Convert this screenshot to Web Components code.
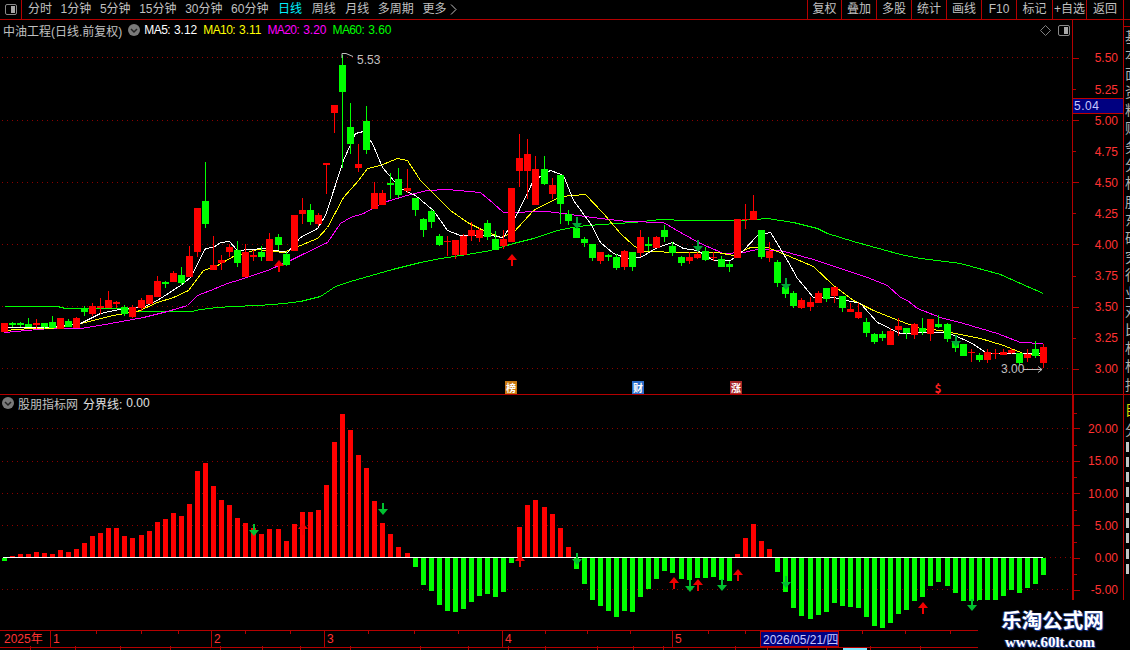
<!DOCTYPE html>
<html lang="zh"><head><meta charset="utf-8"><title>中油工程</title>
<style>
html,body{margin:0;padding:0;background:#000;overflow:hidden}
body{width:1130px;height:650px;font:12px "Liberation Sans","Noto Sans CJK SC",sans-serif;color:#c0c0c0}
</style></head><body>
<kline-app></kline-app>
<script>
const RED='#b40000',TXT='"Liberation Sans","Noto Sans CJK SC",sans-serif';
const NS='http://www.w3.org/2000/svg';
const C=[['r',323,323,332,332],['g',322,323,325,327],['g',322,323,325,327],['g',318,324,327,327],['r',319,323,325,329],['g',323,323,327,329],['g',316,322,328,328],['r',318,318,329,329],['g',319,321,327,327],['r',317,318,328,328],
['g',306,308,312,316],['r',303,306,314,316],['r',298,306,308,314],['r',291,300,308,308],['r',301,302,304,308],['g',305,307,314,316],['r',305,307,317,318],['r',298,300,308,311],['r',295,295,304,304],['r',276,281,297,297],
['g',281,282,284,288],['r',271,273,282,282],['g',267,275,283,285],['r',246,256,277,277],['r',208,208,252,257],['g',162,201,224,228],['r',236,265,270,270],['r',255,260,263,270],['r',244,247,252,257],['g',241,250,263,267],
['r',244,252,277,277],['r',250,255,257,261],['g',246,252,257,261],['r',233,239,261,261],['g',234,237,245,250],['g',252,254,265,266],['r',215,215,251,251],['r',198,210,214,224],['g',204,210,222,225],['r',213,215,224,226],
['r',163,163,165,194],['r',105,105,113,133],['g',55,65,92,168],['g',103,127,144,154],['r',144,164,168,172],['g',106,121,150,154],['r',182,193,209,209],['r',190,193,205,205],['g',173,183,185,199],['g',168,179,195,198],
['r',169,188,191,193],['g',198,198,210,216],['g',218,219,230,237],['g',209,211,222,228],['g',234,236,245,246],['r',236,241,242,256],['r',240,240,255,259],['r',234,236,255,255],['r',222,230,236,241],['r',228,230,238,242],
['g',220,223,237,240],['g',231,239,250,250],['r',230,239,246,249],['r',188,188,242,242],['r',134,158,171,187],['r',139,154,171,199],['r',156,169,205,205],['g',156,169,184,185],['r',178,185,194,199],['g',175,175,204,224],
['g',210,214,221,225],['g',228,228,238,238],['g',237,239,243,247],['g',244,244,258,261],['r',252,252,261,264],['g',254,255,257,261],['g',254,257,268,270],['r',250,251,267,270],['g',252,252,267,271],['r',230,237,253,257],
['g',237,244,246,251],['r',236,237,248,248],['g',225,230,237,242],['g',242,246,253,256],['g',256,257,263,266],['r',252,257,261,264],['r',252,254,258,259],['g',247,251,260,261],['r',252,257,258,261],['g',256,259,267,267],
['g',261,264,267,272],['r',219,219,258,258],['r',204,219,220,229],['r',195,211,220,220],['g',230,230,257,259],['r',242,251,258,262],['g',260,262,283,287],['g',278,287,294,298],['g',291,293,306,308],['r',298,300,308,309],
['r',297,302,307,311],['r',291,293,303,303],['g',288,288,299,302],['r',287,287,296,303],['g',296,296,308,312],['r',303,309,312,312],['r',303,312,318,319],['g',318,322,333,337],['g',333,334,342,344],['g',331,334,338,341],
['r',328,331,345,345],['r',318,326,330,336],['g',328,328,333,339],['r',323,324,335,339],['g',318,328,332,335],['r',319,319,334,341],['g',315,324,327,328],['g',323,324,339,342],['g',335,341,348,352],['g',344,344,356,356],
['r',349,352,353,362],['g',353,355,360,362],['r',349,352,360,363],['r',349,353,354,359],['r',349,352,355,355],['r',348,350,353,354],['g',353,353,363,365],['r',349,354,358,362],['g',341,349,356,358],['r',344,347,363,368]];
const BARS=[-3,1,3,3,5,4,3,7,5,8,14,21,24,29,29,21,19,22,26,35,38,44,41,53,86,94,71,57,52,39,34,29,23,28,28,16,33,45,45,47,72,115,143,127,102,89,56,34,23,10,4,
-9,-27,-33,-47,-53,-54,-51,-44,-38,-36,-39,-34,-5,30,52,57,50,43,29,10,-11,-26,-42,-48,-53,-59,-53,-54,-39,-31,-21,-13,-15,-21,-22,-20,-20,-19,-22,-23,3,19,33,16,8,-14,-34,-50,-58,
-61,-57,-54,-45,-48,-49,-50,-59,-68,-70,-65,-56,-52,-43,-39,-28,-24,-28,-35,-43,-43,-43,-43,-43,-38,-32,-35,-30,-26,-17];
const MA={
w:'3,327 50,327 80,323 100,313 123,308 143,307 160,298 180,285 190,277 205,248 213,247 220,242 229,241 237,250 263,248 287,252 300,237 317,228 325,215 343,160 355,133 363,131 372,143 382,167 400,188 415,195 433,210 447,230 460,235 490,235 503,237 517,213 533,180 550,170 563,175 573,200 590,223 600,242 613,253 627,258 640,257 657,247 672,242 683,248 697,250 713,260 730,260 743,250 757,235 770,232 787,260 797,278 813,297 833,297 860,303 877,322 900,333 930,332 947,332 970,342 987,353 1017,353 1043,353',
y:'4,330 30,328 50,328 80,323 113,315 137,311 157,302 173,297 188,290 203,270 217,265 233,256 257,249 283,252 300,245 317,238 327,227 343,197 358,180 367,168 380,165 397,158 407,160 420,180 437,197 450,210 467,222 483,230 500,237 513,232 533,210 560,196 585,194 603,213 620,233 633,245 643,251 683,252 717,252 733,255 750,247 767,247 787,255 813,266 833,285 853,300 873,310 898,320 920,328 940,330 980,338 1003,345 1023,353 1043,355',
m:'4,332 49,328 80,328 87,327 110,323 143,317 167,311 187,305 197,295 210,290 227,283 240,279 267,270 290,260 300,255 327,242 340,223 350,217 363,213 383,202 410,194 427,190 447,189 480,192 493,203 503,212 547,211 600,218 627,221 663,222 680,232 700,243 723,253 743,252 757,249 780,250 813,259 840,268 867,277 887,285 900,297 907,300 917,308 940,317 963,323 997,333 1020,342 1043,343',
g:'4,306 57,306 65,308 125,308 137,311 191,311 200,309 217,307 233,306 257,305 273,304 283,303 300,301 320,296 335,286 350,281 392,269 420,262 440,258 467,254 490,250 513,243 533,238 557,230 577,226 600,224 633,222 660,219 687,220 740,220 767,218 793,222 817,228 827,233 853,241 900,254 920,258 960,263 1000,274 1020,283 1043,293'};
const UP=[[512,254,1],[279,260,1]],DN=[[577,217],[698,240],[786,278],[956,335]];
const IUP=[[303,523],[520,555],[674,577],[698,579],[738,569],[923,602]],IDN=[[254,524],[383,503],[577,553],[690,580],[722,579],[786,576],[972,599]];
function el(p,n,a){const e=document.createElementNS(NS,n);for(const k in a)e.setAttribute(k,a[k]);p.appendChild(e);return e}
function rect(p,x,y,w,h,f){return el(p,'rect',{x,y,width:w,height:Math.max(h,1),fill:f})}
function grid(s,ys){ys.forEach(y=>el(s,'line',{x1:2,x2:1072,y1:y+.5,y2:y+.5,stroke:'#8c0000','stroke-width':1,'stroke-dasharray':'1 4','shape-rendering':'crispEdges'}))}
function arrow(s,x,y,up,f){
 if(up)el(s,'path',{d:`M${x} ${y}L${x+5} ${y+6}H${x+1}V${y+12}H${x-1}V${y+6}H${x-5}Z`,fill:f});
 else el(s,'path',{d:`M${x} ${y+12}L${x+5} ${y+6}H${x+1}V${y}H${x-1}V${y+6}H${x-5}Z`,fill:f});
}
const tpl=(html)=>{const t=document.createElement('template');t.innerHTML=html;return t};
function def(name,html,init){
 const t=tpl(html);
 customElements.define(name,class extends HTMLElement{connectedCallback(){if(this.shadowRoot)return;const r=this.attachShadow({mode:'open'});r.appendChild(t.content.cloneNode(true));if(init)init.call(this,r)}});
}
def('round-chevron',`<style>:host{display:inline-block;width:12px;height:12px;flex:none}svg{display:block}</style>
<svg width="12" height="12" viewBox="0 0 12 12"><circle cx="6" cy="6" r="6" fill="#7a7a7a"/><path d="M3 5l3 3 3-3" fill="none" stroke="#222" stroke-width="1.5"/></svg>`);
def('panel-icon',`<style>:host{display:inline-block;width:12px;height:11px;flex:none}svg{display:block}</style>
<svg width="12" height="11" viewBox="0 0 12 11"><rect x=".5" y=".5" width="11" height="10" rx="1.5" fill="none" stroke="#8a8a8a"/><rect x="6" y="2" width="4" height="7" fill="#a8a8a8"/></svg>`);
def('tab-item',`<style>:host{display:flex;align-items:center;color:#c0c0c0;white-space:nowrap;line-height:19px;font-size:12px}:host([active]){color:#00f0ff}</style><slot></slot>`);
def('tool-button',`<style>:host{display:block;box-sizing:border-box;border-left:1px solid ${RED};text-align:center;line-height:19px;font-size:12px;color:#c0c0c0;white-space:nowrap;overflow:hidden}</style><slot></slot>`);
def('top-bar',`<style>
:host{display:flex;height:19px;border-bottom:1px solid ${RED};font-family:${TXT}}
.ic{width:21px;border-right:1px solid ${RED};display:flex;align-items:center;justify-content:center}
.tabs{display:flex;gap:8.6px;margin-left:6px;flex:1}
.tools{display:flex;border-right:1px solid ${RED};margin-right:6px}
</style><div class="ic"><panel-icon></panel-icon></div>
<div class="tabs"><slot name="tab"></slot></div><div class="tools"><slot name="tool"></slot></div>`);
def('main-canvas',`<style>:host{display:block;width:1072px;height:374px}svg{display:block}</style><svg width="1072" height="374" viewBox="0 20 1072 374"></svg>`,function(r){
 const s=r.querySelector('svg');grid(s,[57,120,182,244,306,368]);
 const cols={w:'#fff',y:'#ffff00',m:'#ff00ff',g:'#00ff00'};
 const g=el(s,'g',{'shape-rendering':'crispEdges'});
 const l=el(g,'g',{transform:'translate(.5 .5)'});
 ['g','m','y','w'].forEach(k=>el(l,'polyline',{points:MA[k],fill:'none',stroke:cols[k],'stroke-width':1}));
 C.forEach((c,i)=>{const x=Math.floor(1+8.06*i),f=c[0]=='r'?'#ff0000':'#00ff00';
  rect(g,x+3,c[1],1,c[4]-c[1],f);rect(g,x,c[2],7,c[3]-c[2],f)});
 UP.forEach(a=>arrow(s,a[0],a[1],1,'#f00000'));DN.forEach(a=>arrow(s,a[0],a[1],0,'#00a838'));
 el(s,'path',{d:'M342 58V53.5H346L353 56.5M1023 369.5H1042M1038 366.5L1042 369.5L1038 372.5',fill:'none',stroke:'#c0c0c0'});
});
def('sub-canvas',`<style>:host{display:block;width:1072px;height:235px}svg{display:block}</style><svg width="1072" height="235" viewBox="0 395 1072 235"></svg>`,function(r){
 const s=r.querySelector('svg');grid(s,[428,461,493,525,589]);
 el(s,'line',{x1:1045,x2:1072,y1:557.5,y2:557.5,stroke:'#8c0000','stroke-dasharray':'1 4','shape-rendering':'crispEdges'});
 BARS.forEach((v,i)=>{const x=Math.floor(2+8.06*i);if(v>0)rect(s,x,557-v,5,v,'#ff0000');else rect(s,x,558,5,-v,'#00ff00')});
 rect(s,3,557,1040,1,'#fff');
 IUP.forEach(a=>arrow(s,a[0],a[1],1,'#f00000'));IDN.forEach(a=>arrow(s,a[0],a[1],0,'#00c030'));
});
def('axis-row',`<style>
:host{display:flex;align-items:center;height:var(--row);position:relative;color:#ff3232;font-size:12px;justify-content:space-between;padding-right:5px;box-sizing:border-box}
i{display:block;height:1px;width:6px;background:${RED}}
:host([minor]) i{width:3px}
:host([half])::after{content:"";position:absolute;left:0;top:0;width:3px;height:1px;background:${RED}}
</style><i></i><span><slot></slot></span>`);
def('price-axis',`<style>:host{display:block;box-sizing:border-box;width:51px;border-left:var(--axw,2px) solid ${RED};position:relative;font-family:"Liberation Sans",sans-serif}</style><slot></slot>`);
def('strip-rows',`<style>
:host{display:block;width:7px;box-sizing:border-box;border-left:1px solid ${RED};overflow:hidden;font:14px/18.3px "Noto Sans CJK SC",sans-serif;color:#b0b0b0}
div{white-space:nowrap;width:14px;height:18.3px;margin-left:1px}
b{display:block;width:3px;height:10px;background:#c4c4c4;margin:3px 0 5.3px 2px}
.y{color:#d8d800}
</style><slot></slot>`,function(r){
 const mode=this.getAttribute('mode');
 if(mode=='top'){const box=document.createElement('div');box.style.cssText='height:auto;width:auto;margin:0;border-top:1px solid '+RED+';margin-top:6px';
  '基本面资料财务分析股东研究行业对比机构持'.split('').forEach(ch=>{const d=document.createElement('div');d.textContent=ch;box.appendChild(d)});r.appendChild(box)}
 else{const a=document.createElement('div');a.className='y';a.textContent='目';a.style.marginTop='5px';r.appendChild(a);
  const b=document.createElement('div');b.textContent='分';b.style.marginTop='2px';b.style.marginBottom='3px';r.appendChild(b);
  for(let i=0;i<9;i++){r.appendChild(document.createElement('b'))}}
});
def('time-axis',`<style>
:host{display:block;height:20px;position:relative;font-family:"Liberation Sans","Noto Sans CJK SC",sans-serif;color:#ff3232;font-size:12px}
.row{display:flex;height:16px;border-top:1px solid ${RED};border-bottom:1px solid ${RED};box-sizing:content-box;line-height:16px}
.c{border-left:1px solid ${RED};padding-left:2px;box-sizing:border-box;white-space:nowrap}
.d{background:#000080;color:#c8c8ff;border:1px solid ${RED};box-sizing:border-box;padding-left:2px;white-space:nowrap}
svg{position:absolute;left:0;top:0}
</style><div class="row"><div class="c" style="width:50px;border:0;padding-left:4px">2025年</div><div class="c" style="width:161px">1</div><div class="c" style="width:113px">2</div><div class="c" style="width:178px">3</div><div class="c" style="width:170px">4</div><div class="c" style="width:88px">5</div><div class="d" style="width:79px">2026/05/21/四</div></div>
<svg width="1130" height="20"></svg>`,function(r){
 const s=r.querySelector('svg');
 [96,141,178,245,290,368,414,458,545,587,630,708,745,862,905,950].forEach(x=>rect(s,x,1,1,3,RED));
 [30,75,120,170,220,262,300,350,420,468,508,545,597,633,663,735,767,808,826,870,920].forEach(x=>rect(s,x,16,1,4,RED));
 rect(s,843,18,24,2,'#80e8ff');
});
def('legend-line',`<style>:host{display:flex;align-items:center;gap:4px;height:14px;font-size:12px;white-space:nowrap;position:absolute;left:3px;top:var(--top,3px);font-family:${TXT}}
</style><slot></slot>`);
def('ma-val',`<style>:host{display:inline-block;letter-spacing:0;margin-left:4px}</style><slot></slot>`);
def('chart-note',`<style>:host{position:absolute;font-size:12px;line-height:14px;color:#c0c0c0;white-space:nowrap;font-family:"Liberation Sans",sans-serif}</style><slot></slot>`);
def('event-tag',`<style>:host{position:absolute;top:361px;width:12px;height:13px;font:bold 10px/13px "Noto Sans CJK SC",sans-serif;text-align:center;color:#fff;background:var(--bg,#c07000)}</style><slot></slot>`);
def('chart-pane',`<style>:host{display:flex;position:relative}</style><slot></slot>`);
def('water-mark',`<style>:host{position:absolute;left:978px;top:600px;width:152px;height:50px;background:#000;text-align:center;color:#fff;font-weight:bold;font-family:"Liberation Serif","Noto Sans CJK SC",serif;text-shadow:1px 1px 1px #2040a0,-1px 0 1px #2040a0}
.a{font-size:20.5px;line-height:24px;margin:7px 0 0 -3px;font-family:"Noto Sans CJK SC",serif}.b{font-size:15px;line-height:16px;margin:3px 0 0 -8px}</style><div class="a">乐淘公式网</div><div class="b">www.60lt.com</div>`);
def('kline-app',`<style>:host{display:block;width:1130px;height:650px;position:relative;background:#000;overflow:hidden;--row:31.08px}
.sep{height:1px;background:${RED}}
.tip{position:absolute;right:60px;top:5px;display:flex;gap:7px;align-items:center}
.mainaxis{padding-top:22.96px;height:374px;--axw:1px}.subaxis{padding-top:17.85px;height:205px;--row:32.3px}
.s1{color:#fff}.y{color:#ffff00}.m{color:#ff00ff}.g{color:#00ff00}.gap{margin-left:2px}
.ml{letter-spacing:-.6px}
</style>
<top-bar>
<tab-item slot="tab">分时</tab-item><tab-item slot="tab">1分钟</tab-item><tab-item slot="tab">5分钟</tab-item><tab-item slot="tab">15分钟</tab-item><tab-item slot="tab">30分钟</tab-item><tab-item slot="tab">60分钟</tab-item><tab-item slot="tab" active style="margin-left:1px">日线</tab-item><tab-item slot="tab" style="margin-left:1px">周线</tab-item><tab-item slot="tab" style="margin-left:1px">月线</tab-item><tab-item slot="tab">多周期</tab-item><tab-item slot="tab">更多<svg style="display:block;margin-left:4px" width="7" height="11" viewBox="0 0 7 11"><path d="M1 .5L6 5.5L1 10.5" fill="none" stroke="#c0c0c0"/></svg></tab-item>
<tool-button slot="tool" style="width:34px">复权</tool-button><tool-button slot="tool" style="width:35px">叠加</tool-button><tool-button slot="tool" style="width:35px">多股</tool-button><tool-button slot="tool" style="width:35px">统计</tool-button><tool-button slot="tool" style="width:35px">画线</tool-button><tool-button slot="tool" style="width:35px">F10</tool-button><tool-button slot="tool" style="width:36px">标记</tool-button><tool-button slot="tool" style="width:34px">+自选</tool-button><tool-button slot="tool" style="width:37px">返回</tool-button>
</top-bar>
<chart-pane style="height:374px">
 <main-canvas></main-canvas>
 <price-axis class="mainaxis">
  <axis-row>5.50</axis-row><axis-row minor>5.25</axis-row><axis-row>5.00</axis-row><axis-row minor>4.75</axis-row><axis-row>4.50</axis-row><axis-row minor>4.25</axis-row><axis-row>4.00</axis-row><axis-row minor>3.75</axis-row><axis-row>3.50</axis-row><axis-row minor>3.25</axis-row><axis-row>3.00</axis-row>
 </price-axis>
 <strip-rows mode="top"></strip-rows>
 <legend-line>
  <span style="color:#c0c0c0">中油工程(日线.前复权)</span><round-chevron style="margin-left:2px"></round-chevron>
  <span class="s1"><span class="ml">MA5:</span><ma-val>3.12</ma-val></span><span class="y gap"><span class="ml">MA10:</span><ma-val>3.11</ma-val></span><span class="m gap"><span class="ml">MA20:</span><ma-val>3.20</ma-val></span><span class="g gap"><span class="ml">MA60:</span><ma-val>3.60</ma-val></span>
 </legend-line>
 <div class="tip"><svg width="11" height="11" viewBox="0 0 11 11"><path d="M5.5 .5L10.5 5.5L5.5 10.5L.5 5.5Z" fill="none" stroke="#808080"/></svg><panel-icon></panel-icon></div>
 <chart-note style="left:357px;top:33px">5.53</chart-note>
 <chart-note style="left:1001px;top:342px">3.00</chart-note>
 <event-tag style="left:505px;--bg:#c87810">榜</event-tag><event-tag style="left:632px;--bg:#2a6cc8">财</event-tag><event-tag style="left:730px;--bg:#a82828">涨</event-tag><event-tag style="left:932px;--bg:transparent;color:#ff2020;font-size:12px">$</event-tag>
 <chart-note style="left:1073px;top:78px;width:50px;height:16px;box-sizing:border-box;background:#000080;color:#c8c8ff;border-top:1px solid #c00000;border-bottom:1px solid #c00000;line-height:14px;padding-left:1px;letter-spacing:.5px">5.04</chart-note>
</chart-pane>
<div class="sep"></div>
<chart-pane style="height:235px">
 <sub-canvas></sub-canvas>
 <price-axis class="subaxis">
  <axis-row half>20.00</axis-row><axis-row half>15.00</axis-row><axis-row half>10.00</axis-row><axis-row half>5.00</axis-row><axis-row half>0.00</axis-row><axis-row half>-5.00</axis-row>
 </price-axis>
 <strip-rows mode="sub" style="height:205px"></strip-rows>
 <legend-line style="left:2px;--top:1px"><round-chevron></round-chevron><span style="color:#c0c0c0">股朋指标网</span><span style="color:#e0e0e0;margin-left:1px">分界线:</span><span style="color:#e0e0e0">0.00</span></legend-line>
</chart-pane>
<time-axis></time-axis>
<water-mark></water-mark>`);
</script>
</body></html>
